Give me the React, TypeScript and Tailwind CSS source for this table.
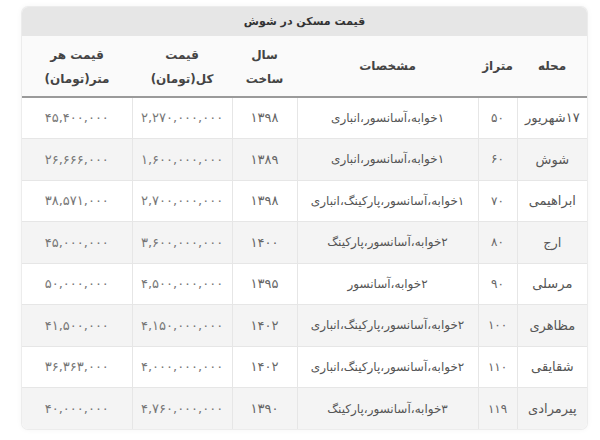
import React from "react";

const rows: string[][] = [
  ["۱۷شهریور", "۵۰", "۱خوابه،آسانسور،انباری", "۱۳۹۸", "۲,۲۷۰,۰۰۰,۰۰۰", "۴۵,۴۰۰,۰۰۰"],
  ["شوش", "۶۰", "۱خوابه،آسانسور،انباری", "۱۳۸۹", "۱,۶۰۰,۰۰۰,۰۰۰", "۲۶,۶۶۶,۰۰۰"],
  ["ابراهیمی", "۷۰", "۱خوابه،آسانسور،پارکینگ،انباری", "۱۳۹۸", "۲,۷۰۰,۰۰۰,۰۰۰", "۳۸,۵۷۱,۰۰۰"],
  ["ارج", "۸۰", "۲خوابه،آسانسور،پارکینگ", "۱۴۰۰", "۳,۶۰۰,۰۰۰,۰۰۰", "۴۵,۰۰۰,۰۰۰"],
  ["مرسلی", "۹۰", "۲خوابه،آسانسور", "۱۳۹۵", "۴,۵۰۰,۰۰۰,۰۰۰", "۵۰,۰۰۰,۰۰۰"],
  ["مظاهری", "۱۰۰", "۲خوابه،آسانسور،پارکینگ،انباری", "۱۴۰۲", "۴,۱۵۰,۰۰۰,۰۰۰", "۴۱,۵۰۰,۰۰۰"],
  ["شقایقی", "۱۱۰", "۲خوابه،آسانسور،پارکینگ،انباری", "۱۴۰۲", "۴,۰۰۰,۰۰۰,۰۰۰", "۳۶,۳۶۳,۰۰۰"],
  ["پیرمرادی", "۱۱۹", "۳خوابه،آسانسور،پارکینگ", "۱۳۹۰", "۴,۷۶۰,۰۰۰,۰۰۰", "۴۰,۰۰۰,۰۰۰"],
];

const cellCls = [
  "text-center border-t border-[#e6e6e6] text-[13px] text-[#555]",
  "text-center border-t border-r border-[#e6e6e6] text-[12px] text-[#666]",
  "text-center border-t border-r border-[#e6e6e6] text-[12px] text-[#555] whitespace-nowrap",
  "text-center border-t border-r border-[#e6e6e6] text-[13px] text-[#666]",
  "text-center border-t border-r border-[#e6e6e6] text-[13px] text-[#777] whitespace-nowrap",
  "text-center border-t border-r border-[#e6e6e6] text-[13px] text-[#777] whitespace-nowrap",
];

export default function App() {
  return (
    <div
      className="w-[600px] h-[440px] bg-white pt-[7px] pl-[22px] overflow-hidden"
      style={{ fontFamily: '"DejaVu Sans", sans-serif' }}
    >
      <div className="w-[565px] rounded-md shadow-[0_0_0_1px_#ececec,0_0_6px_rgba(0,0,0,0.06)] overflow-hidden bg-white">
        <table dir="rtl" className="w-[565px] table-fixed border-collapse text-[12px] text-[#555]">
          <colgroup>
            <col className="w-[70px]" />
            <col className="w-[39px]" />
            <col className="w-[181px]" />
            <col className="w-[65px]" />
            <col className="w-[100px]" />
            <col className="w-[110px]" />
          </colgroup>
          <thead>
            <tr className="h-[29px] bg-[#e6e6e6]">
              <th colSpan={6} className="text-center font-bold text-[11px] text-[#333] pt-[2px]">
                قیمت مسکن در شوش
              </th>
            </tr>
            <tr className="h-[61px] bg-[#fafafa] border-b-2 border-[#9a9a9a] text-[#444] text-[12px]">
              <th className="font-bold leading-[24px]">محله</th>
              <th className="font-bold leading-[24px]">متراژ</th>
              <th className="font-bold leading-[24px]">مشخصات</th>
              <th className="font-bold leading-[24px] pt-[2px]">
                سال
                <br />
                ساخت
              </th>
              <th className="font-bold leading-[24px] pt-[2px]">
                قیمت
                <br />
                کل(تومان)
              </th>
              <th className="font-bold leading-[24px] pt-[2px]">
                قیمت هر
                <br />
                متر(تومان)
              </th>
            </tr>
          </thead>
          <tbody>
            {rows.map((r, i) => (
              <tr key={i} className={i % 2 === 0 ? "h-[41.5px] bg-white" : "h-[41.5px] bg-[#f4f4f4]"}>
                {r.map((c, j) => (
                  <td key={j} className={cellCls[j]}>
                    {c}
                  </td>
                ))}
              </tr>
            ))}
          </tbody>
        </table>
      </div>
    </div>
  );
}
